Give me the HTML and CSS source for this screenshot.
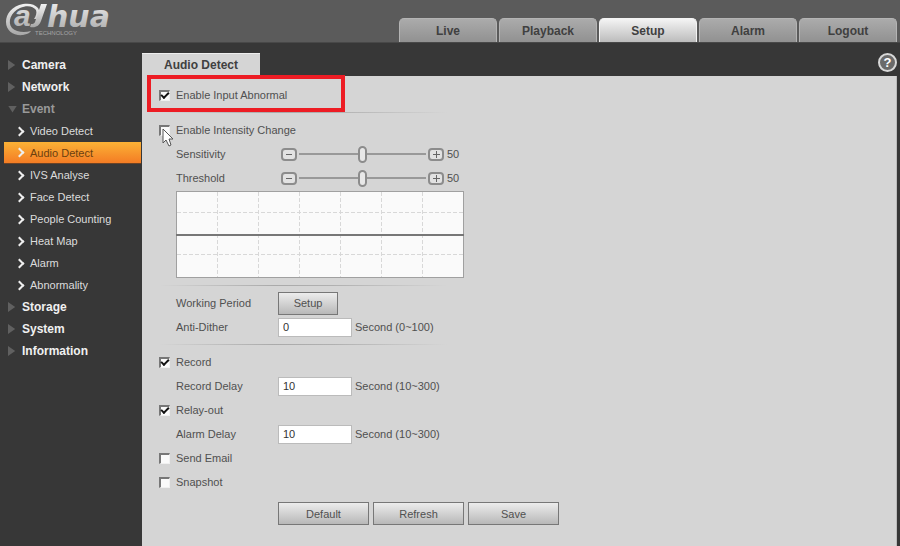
FILE: index.html
```html
<!DOCTYPE html>
<html lang="en">
<head>
  <meta charset="UTF-8" />
  <meta name="viewport" content="width=device-width, initial-scale=1.0" />
  <title>Audio Detect</title>
  <link rel="stylesheet" href="styles.css">
</head>
<body>
  <header class="header">
    <svg class="logo" viewBox="0 0 116 38" width="116" height="38" role="img" aria-label="alhua technology">
      <defs>
        <linearGradient id="silver" x1="0" y1="0" x2="0" y2="1">
          <stop offset="0" stop-color="#f2f2f2" />
          <stop offset="1" stop-color="#a6a6a6" />
        </linearGradient>
      </defs>
      <path fill="url(#silver)" d="M38 8C35 4 29 3 23 4C12 6 6 14 6 22C6 31 14 36 23 35C27 34 30 33 31 31C24 33 16 32 12 28C7 22 11 12 20 8C27 5 33 6 36 10C37 13 36 16 34 19L37 19C40 15 40 11 38 8Z" />
      <path fill="url(#silver)" d="M41 4H47L41 21C39 26 36 28 30 27L31 24C35 24 35 22 36 19Z" />
      <text class="logo-text first" x="14" y="26">a</text>
      <text class="logo-text" x="47" y="27">hua</text>
      <text class="logo-sub" x="35" y="35">TECHNOLOGY</text>
    </svg>
    <nav class="tabs">
      <button type="button" class="tab">Live</button>
      <button type="button" class="tab">Playback</button>
      <button type="button" class="tab active">Setup</button>
      <button type="button" class="tab">Alarm</button>
      <button type="button" class="tab">Logout</button>
    </nav>
  </header>

  <div class="layout">
    <nav class="sidebar">
      <a href="#" class="menu">Camera</a>
      <a href="#" class="menu">Network</a>
      <a href="#" class="menu open">Event</a>
      <a href="#" class="sub">Video Detect</a>
      <a href="#" class="sub selected">Audio Detect</a>
      <a href="#" class="sub">IVS Analyse</a>
      <a href="#" class="sub">Face Detect</a>
      <a href="#" class="sub">People Counting</a>
      <a href="#" class="sub">Heat Map</a>
      <a href="#" class="sub">Alarm</a>
      <a href="#" class="sub">Abnormality</a>
      <a href="#" class="menu">Storage</a>
      <a href="#" class="menu">System</a>
      <a href="#" class="menu">Information</a>
    </nav>

    <main class="content">
      <div class="content-head">
        <h1 class="page-tab">Audio Detect</h1>
        <button type="button" class="help" aria-label="Help">?</button>
      </div>

      <form class="panel">
        <div class="row highlight">
          <input type="checkbox" id="inputAbnormal" checked />
          <label for="inputAbnormal">Enable Input Abnormal</label>
        </div>
        <div class="divider"></div>

        <div class="row">
          <input type="checkbox" id="intensity" />
          <label for="intensity">Enable Intensity Change</label>
          <svg class="cursor" viewBox="0 0 12 19" width="12" height="19" aria-hidden="true">
            <path d="M1 1V15L4 12L7 18L9 17L7 11H11Z" fill="#fff" stroke="#555" />
          </svg>
        </div>
        <div class="row">
          <label class="name" for="sensitivity">Sensitivity</label>
          <div class="slider">
            <button type="button" class="step" aria-label="Decrease sensitivity"></button>
            <input type="range" id="sensitivity" min="0" max="100" value="50" />
            <button type="button" class="step plus" aria-label="Increase sensitivity"></button>
            <output for="sensitivity">50</output>
          </div>
        </div>
        <div class="row">
          <label class="name" for="threshold">Threshold</label>
          <div class="slider">
            <button type="button" class="step" aria-label="Decrease threshold"></button>
            <input type="range" id="threshold" min="0" max="100" value="50" />
            <button type="button" class="step plus" aria-label="Increase threshold"></button>
            <output for="threshold">50</output>
          </div>
        </div>
        <svg class="chart" viewBox="0 0 288 87" aria-hidden="true">
          <rect x="0.5" y="0.5" width="287" height="86" fill="#fafafa" stroke="#a0a0a0" />
          <path d="M41.5 1V86M82.5 1V86M123.5 1V86M164.5 1V86M205.5 1V86M246.5 1V86M1 21.5H287M1 63.5H287" stroke="#d8d8d8" stroke-dasharray="4 2" />
          <path d="M0 44H288" stroke="#777" stroke-width="2" />
        </svg>
        <div class="divider"></div>

        <div class="row">
          <span class="name">Working Period</span>
          <button type="button" class="btn small">Setup</button>
        </div>
        <div class="row">
          <label class="name" for="dither">Anti-Dither</label>
          <input type="text" id="dither" value="0" />
          <span class="unit">Second (0~100)</span>
        </div>
        <div class="divider"></div>

        <div class="row">
          <input type="checkbox" id="record" checked />
          <label for="record">Record</label>
        </div>
        <div class="row">
          <label class="name" for="recordDelay">Record Delay</label>
          <input type="text" id="recordDelay" value="10" />
          <span class="unit">Second (10~300)</span>
        </div>
        <div class="row">
          <input type="checkbox" id="relay" checked />
          <label for="relay">Relay-out</label>
        </div>
        <div class="row">
          <label class="name" for="alarmDelay">Alarm Delay</label>
          <input type="text" id="alarmDelay" value="10" />
          <span class="unit">Second (10~300)</span>
        </div>
        <div class="row">
          <input type="checkbox" id="email" />
          <label for="email">Send Email</label>
        </div>
        <div class="row">
          <input type="checkbox" id="snapshot" />
          <label for="snapshot">Snapshot</label>
        </div>

        <div class="actions">
          <button type="button" class="btn">Default</button>
          <button type="button" class="btn">Refresh</button>
          <button type="button" class="btn">Save</button>
        </div>
      </form>
    </main>
  </div>
</body>
</html>
```
FILE: styles.css
```css
*, *::before, *::after {
  box-sizing: border-box;
}
body {
  display: flex;
  flex-direction: column;
  min-height: 100vh;
  margin: 0;
  background: #373737;
  color: #505050;
  font-family: "Liberation Sans", Arial, sans-serif;
  font-size: 11px;
}
button, input {
  font-family: inherit;
  font-size: inherit;
  margin: 0;
}

/* header */
.header {
  display: flex;
  justify-content: space-between;
  align-items: flex-end;
  height: 43px;
  padding-right: 3px;
  background: #5b5b5b;
  border-bottom: 1px solid #484848;
}
.logo {
  align-self: flex-start;
}
.logo-text {
  font-family: "DejaVu Sans", sans-serif;
  font-size: 30px;
  font-weight: bold;
  font-style: italic;
  fill: url(#silver);
}
.logo-text.first {
  font-family: "Liberation Sans", Arial, sans-serif;
}
.logo-sub {
  font-size: 6px;
  fill: #a6a6a6;
}
.tabs {
  display: flex;
  gap: 2px;
}
.tab {
  width: 98px;
  height: 24px;
  padding: 0;
  border: 1px solid #b4b4b4;
  border-bottom: 0;
  border-radius: 5px 5px 0 0;
  background: linear-gradient(#ababab, #919191);
  color: #404040;
  font-size: 12px;
  font-weight: bold;
}
.tab.active {
  border-color: #f4f4f4;
  background: linear-gradient(#f4f4f4, #bcbcbc);
}

.layout {
  display: flex;
  flex: 1;
}

/* sidebar */
.sidebar {
  width: 142px;
  padding: 11px 1px 0 4px;
}
.menu, .sub {
  display: flex;
  align-items: center;
  height: 22px;
  text-decoration: none;
}
.menu {
  gap: 5px;
  padding-left: 4px;
  color: #f0f0f0;
  font-size: 12px;
  font-weight: bold;
}
.menu::before {
  content: "";
  width: 9px;
  height: 10px;
  background: #606060;
  clip-path: polygon(0 0, 80% 50%, 0 100%);
}
.menu.open {
  color: #999;
}
.menu.open::before {
  height: 7px;
  clip-path: polygon(0 0, 100% 0, 50% 100%);
}
.sub {
  gap: 7px;
  padding-left: 12px;
  color: #dcdcdc;
}
.sub::before {
  content: "";
  width: 7px;
  height: 7px;
  border: solid #eee;
  border-width: 2px 2px 0 0;
  transform: rotate(45deg);
}
.sub.selected {
  background: linear-gradient(#fbb236, #f47c24);
  border-bottom: 1px solid #6b4326;
  color: #6b4010;
}

/* content */
.content {
  display: flex;
  flex: 1;
  flex-direction: column;
  padding-right: 3px;
}
.content-head {
  display: flex;
  justify-content: space-between;
  align-items: flex-end;
  height: 33px;
}
.page-tab {
  margin: 0;
  padding: 0 22px;
  background: #d5d5d5;
  border-top: 1px solid #eee;
  color: #404040;
  font-size: 12px;
  line-height: 22px;
}
.help {
  align-self: center;
  width: 19px;
  height: 19px;
  margin-top: 6px;
  padding: 0;
  border: 2px solid #d8d8d8;
  border-radius: 50%;
  background: #6a6a6a;
  color: #fff;
  font-size: 13px;
  font-weight: bold;
  line-height: 15px;
}
.panel {
  flex: 1;
  padding: 7px 17px 8px;
  background: #d5d5d5;
  border-right: 1px solid #bbb;
}
.row {
  position: relative;
  display: flex;
  align-items: center;
  height: 24px;
}
.name {
  width: 119px;
  padding-left: 17px;
}
.unit {
  margin-left: 3px;
}
.highlight::after {
  content: "";
  position: absolute;
  top: -8px;
  left: -12px;
  width: 198px;
  height: 37px;
  border: 4px solid #ed1c24;
  pointer-events: none;
}
.cursor {
  position: absolute;
  top: 10px;
  left: 3px;
}
.divider {
  width: 288px;
  height: 11px;
  background: linear-gradient(90deg, transparent, #aaa 40%, #b0b0b0 60%, transparent) center / 100% 1px no-repeat;
}

input[type="checkbox"] {
  appearance: none;
  width: 11px;
  height: 11px;
  margin-right: 6px;
  border: 1px solid #f0f0f0;
  border-top: 2px solid #777;
  border-left: 2px solid #777;
  background: #fafafa;
}
input[type="checkbox"]:checked::before {
  content: "";
  display: block;
  width: 8px;
  height: 5px;
  border: solid #111;
  border-width: 0 0 2px 2px;
  transform: rotate(-45deg);
}
input[type="text"] {
  width: 74px;
  height: 19px;
  padding: 0 4px;
  border: 1px solid #bbb;
  background: #fff;
  color: #333;
}

.slider {
  display: flex;
  align-items: center;
  padding-left: 3px;
}
.step {
  width: 16px;
  height: 13px;
  padding: 0;
  border: 2px solid #8c8c8c;
  border-radius: 4px;
  background: linear-gradient(#666, #666) center / 6px 1px no-repeat, #e2e2e2;
}
.step.plus {
  background: linear-gradient(#666, #666) center / 7px 1px no-repeat, linear-gradient(#666, #666) center / 1px 7px no-repeat, #e2e2e2;
}
.slider output {
  margin-left: 3px;
}
input[type="range"] {
  appearance: none;
  width: 127px;
  height: 17px;
  margin: 0 2px;
  background: linear-gradient(#999, #999) center / 100% 2px no-repeat;
}
input[type="range"]::-webkit-slider-thumb {
  appearance: none;
  width: 9px;
  height: 17px;
  border: 2px solid #8c8c8c;
  border-radius: 5px;
  background: #e8e8e8;
}

.chart {
  display: block;
  width: 288px;
  height: 87px;
  margin: 1px 0 2px 17px;
}

.btn {
  width: 91px;
  height: 23px;
  padding: 0;
  border: 1px solid #777;
  background: linear-gradient(#ececec, #b8b8b8);
  color: #505050;
}
.btn.small {
  width: 60px;
}
.actions {
  display: flex;
  gap: 4px;
  margin: 8px 0 0 119px;
}
```
